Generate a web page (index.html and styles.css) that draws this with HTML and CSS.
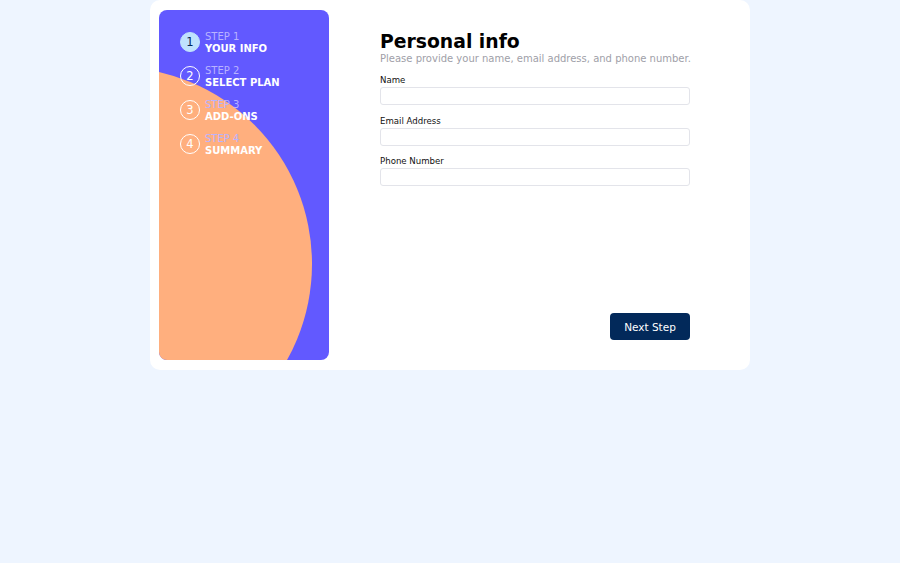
FILE: index.html
```html
<!DOCTYPE html>
<html lang="en">
<head>
<meta charset="utf-8">
<title>Multi-step form</title>
<link rel="stylesheet" href="styles.css">
</head>
<body>
<main class="card">
  <aside class="sidebar">
    <ol class="steps">
      <li class="step active"><span class="num">1</span><div class="step-text"><span class="step-label">STEP 1</span><span class="step-title">YOUR INFO</span></div></li>
      <li class="step"><span class="num">2</span><div class="step-text"><span class="step-label">STEP 2</span><span class="step-title">SELECT PLAN</span></div></li>
      <li class="step"><span class="num">3</span><div class="step-text"><span class="step-label">STEP 3</span><span class="step-title">ADD-ONS</span></div></li>
      <li class="step"><span class="num">4</span><div class="step-text"><span class="step-label">STEP 4</span><span class="step-title">SUMMARY</span></div></li>
    </ol>
  </aside>
  <section class="content">
    <h1 class="title">Personal info</h1>
    <p class="subtitle">Please provide your name, email address, and phone number.</p>
    <form class="form">
      <label class="field"><span class="field-label">Name</span><input class="input" type="text"></label>
      <label class="field"><span class="field-label">Email Address</span><input class="input" type="email"></label>
      <label class="field"><span class="field-label">Phone Number</span><input class="input" type="tel"></label>
    </form>
    <div class="actions"><button class="next" type="button">Next Step</button></div>
  </section>
</main>
</body>
</html>
```
FILE: styles.css
```css
* { box-sizing: border-box; }
html, body { margin: 0; padding: 0; }
body {
  background: #eef5ff;
  font-family: "DejaVu Sans", sans-serif;
  height: 563px;
}
.card {
  width: 600px;
  margin: 0 auto;
  background: #fff;
  border-radius: 10px;
  padding: 10px 60px 10px 9px;
  display: flex;
  gap: 51px;
  height: 370px;
}
.sidebar {
  position: relative;
  overflow: hidden;
  width: 170px;
  height: 350px;
  flex: none;
  background: #6259ff;
  border-radius: 8px;
  padding: 22px 0 0 21px;
}
.sidebar::before {
  content: "";
  position: absolute;
  left: -241px;
  top: 57px;
  width: 394px;
  height: 394px;
  border-radius: 50%;
  background: #ffaf7e;
}
.steps {
  position: relative;
  list-style: none;
  margin: 0;
  padding: 0;
  display: flex;
  flex-direction: column;
  gap: 14px;
}
.step {
  display: flex;
  align-items: center;
  gap: 5px;
  height: 20px;
}
.num {
  width: 20px;
  height: 20px;
  border: 1px solid #fff;
  border-radius: 50%;
  color: #fff;
  font-size: 11.5px;
  display: flex;
  align-items: center;
  justify-content: center;
  flex: none;
}
.step.active .num {
  background: #bfe2fd;
  border-color: #bfe2fd;
  color: #02295a;
}
.step-text {
  display: flex;
  flex-direction: column;
  line-height: 11.5px;
  padding-top: 1px;
}
.step-label {
  color: #b9b3ff;
  font-size: 10px;
}
.step-title {
  color: #fff;
  font-size: 10px;
  font-weight: bold;
}
.content {
  width: 310px;
  flex: none;
  display: flex;
  flex-direction: column;
  padding: 22px 0 20px;
}
.title {
  margin: 0;
  font-size: 18.8px;
  line-height: 20px;
  font-weight: bold;
  color: #000;
}
.subtitle {
  margin: 0;
  font-size: 10px;
  line-height: 14px;
  color: #a0a0a8;
  white-space: nowrap;
}
.form {
  margin-top: 8px;
  display: flex;
  flex-direction: column;
  gap: 9.5px;
}
.field {
  display: flex;
  flex-direction: column;
}
.field-label {
  font-size: 8.6px;
  line-height: 13px;
  color: #111;
}
.input {
  height: 18px;
  width: 100%;
  border: 1px solid #e3e4ea;
  border-radius: 3px;
  background: #fff;
  margin: 0;
}
.actions {
  margin-top: auto;
  display: flex;
  justify-content: flex-end;
}
.next {
  width: 80px;
  height: 27px;
  border: none;
  border-radius: 4px;
  background: #02295a;
  color: #fff;
  font-family: "DejaVu Sans", sans-serif;
  font-size: 10.5px;
}
```
